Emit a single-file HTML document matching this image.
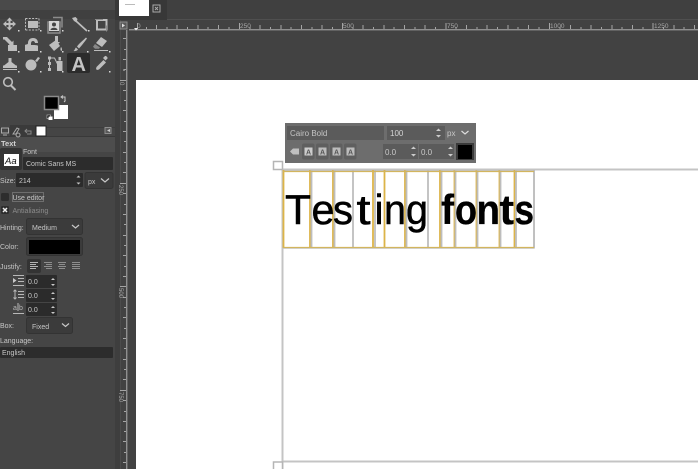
<!DOCTYPE html>
<html><head><meta charset="utf-8">
<style>
html,body{margin:0;padding:0;width:698px;height:469px;overflow:hidden;background:#434343}
svg{display:block;filter:blur(.3px)}
text{font-family:"Liberation Sans",sans-serif}
</style></head>
<body>
<svg width="698" height="469" viewBox="0 0 698 469" xmlns="http://www.w3.org/2000/svg">
<rect width="698" height="469" fill="#424242"/>
<!-- left panel -->
<rect x="0" y="0" width="115" height="469" fill="#454545"/>
<rect x="115" y="0" width="5" height="469" fill="#3e3e3e"/>
<rect x="120" y="0" width="1" height="469" fill="#4c4c4c"/>
<rect x="121" y="0" width="6" height="469" fill="#424242"/>
<circle cx="124" cy="70" r=".8" fill="#ccc"/>
<!-- top tab -->
<rect x="0" y="0" width="698" height="19" fill="#404040"/>
<rect x="0" y="0" width="115" height="10" fill="#4a4a4a"/>
<rect x="115" y="0" width="52" height="20" fill="#383838"/>
<rect x="119" y="0" width="30" height="16" fill="#fff"/>
<rect x="125" y="4" width="10" height="1" fill="#bbb"/>
<rect x="153" y="5" width="7" height="7" fill="none" stroke="#aaa"/>
<path d="M155 7l3 3m0-3l-3 3" stroke="#aaa"/>
<rect x="167" y="19" width="531" height="1" fill="#4f4f4f"/>
<!-- ruler corner -->
<rect x="120" y="22" width="7" height="7" fill="#5a5a5a" stroke="#8c8c8c"/>
<path d="M122 23.500l3 2-3 2z" fill="#ddd"/>
<!-- horizontal ruler -->
<rect x="129" y="29" width="569" height="1.400" fill="#8f8f8f"/>
<g stroke="#a5a5a5" stroke-width="1">
<path d="M137.500 23V29M146.500 27V29M156.500 25V29M167 27V29M177 25V29M187.500 27V29M198 25V29M208 27V29M218.500 25V29M229 27V29"/>
<path d="M239.500 23V29M250 27V29M260 25V29M270.500 27V29M281 25V29M291 27V29M301.500 25V29M312 27V29M322 25V29M332.500 27V29"/>
<path d="M342.500 23V29M353 27V29M363 25V29M373.500 27V29M384 25V29M394 27V29M404.500 25V29M415 27V29M425 25V29M435.500 27V29"/>
<path d="M446 23V29M456 27V29M466.500 25V29M477 27V29M487 25V29M497.500 27V29M508 25V29M518 27V29M528.500 25V29M539 27V29"/>
<path d="M549.500 23V29M560 27V29M570.500 25V29M581 27V29M591 25V29M601.500 27V29M612 25V29M622 27V29M632.500 25V29M643 27V29"/>
<path d="M653 23V29M663.500 27V29M674 25V29M684 27V29M694.500 25V29"/>
</g>
<g font-size="6.500" fill="#a8a8a8">
<text x="137" y="28">0</text>
<text x="240" y="28">250</text>
<text x="343" y="28">500</text>
<text x="447" y="28">750</text>
<text x="550" y="28">1000</text>
<text x="654" y="28">1250</text>
</g>
<path d="M134 28h4l-2 2.500z" fill="#eee"/>
<!-- vertical ruler -->
<rect x="126" y="30" width="1.400" height="439" fill="#8f8f8f"/>
<g stroke="#a5a5a5">
<path d="M123 38.500H126M124 49.500H126M123 59.500H126M124 69.500H126M120 80.500H126M123 90.500H126M124 100.500H126M123 110.500H126M124 121.500H126M123 131.500H126M124 141.500H126M123 152.500H126M124 162.500H126M123 172.500H126M120 183.500H126M123 193.500H126M124 204.500H126M123 214.500H126M124 224.500H126M123 235.500H126M124 245.500H126M123 255.500H126M124 266.500H126M123 276.500H126M120 286.500H126M123 297.500H126M124 307.500H126M123 317.500H126M124 328.500H126M123 338.500H126M124 348.500H126M123 359.500H126M124 369.500H126M123 379.500H126M120 390.500H126M123 400.500H126M124 411.500H126M123 421.500H126M124 431.500H126M123 441.500H126M124 452.500H126M123 462.500H126"/>
</g>
<g font-size="6" fill="#a8a8a8">
<text transform="translate(120,82) rotate(90)">0</text>
<text transform="translate(119,185) rotate(90)">250</text>
<text transform="translate(119,288) rotate(90)">500</text>
<text transform="translate(119,392) rotate(90)">750</text>
</g>
<!-- canvas -->
<rect x="136" y="80" width="562" height="389" fill="#fff"/>

<!-- tool icons -->
<g fill="#bdbdbd" stroke="none">
<!-- move -->
<path d="M9.500 17.500L6.500 20.800 8.500 20.800 8.500 23H6.300V21L3 24l3.300 3v-2h2.200v2.200h-2l3 3.300 3-3.300h-2V25h2.200v2l3.300-3-3.300-3v2H10.500v-2.200h2z"/>
<!-- rect select -->
<rect x="28" y="21" width="10" height="7"/>
<path d="M25.500 18.500h13.500M25.500 30h13.500M25.500 18.500V30M39 18.500V30" stroke="#bdbdbd" stroke-width="1" stroke-dasharray="2 1.300" fill="none"/>
<!-- align -->
<rect x="48" y="22" width="12" height="11" fill="none" stroke="#8c8c8c" stroke-width="1.500"/>
<path d="M53 17.500h9v10" fill="none" stroke="#8c8c8c" stroke-width="1.500"/>
<rect x="49" y="21" width="10" height="10" fill="#d5d5d5"/>
<circle cx="54" cy="24.500" r="2" fill="#444"/>
<path d="M50.500 30c0-3 7-3 7 0z" fill="#444"/>
<!-- fuzzy wand -->
<path d="M76 21l11 10" stroke="#bdbdbd" stroke-width="1.800" fill="none"/>
<path d="M72 18l3.500-1 2 2-1 3.500-2.500-1.500z"/>
<!-- crop -->
<rect x="97" y="20" width="9.500" height="9.500" fill="none" stroke="#bdbdbd" stroke-width="2"/>
<path d="M95 19.500h8M106.500 31.500v-6" stroke="#8c8c8c" fill="none"/>
<!-- transform -->
<path d="M3 37h4l5 5 1.500-1.500V46H8l1.500-1.500-5-5H3z"/>
<rect x="8" y="45" width="9" height="6"/>
<!-- heal -->
<path d="M25 51v-6c1-1 3 0 3-2 0-3 2-5 5-5 4 0 5 3 5 5h-3c0-1-1-2-2-2-2 0-2 2-2 4 3 0 7 0 7 1v5z"/>
<!-- bucket -->
<path d="M49 45l7-5 4 6-6 5z"/>
<path d="M55 36h3v6h2l-3.500 4-3.500-4h2z"/>
<path d="M61 47c1 1 1.500 3 .5 4-1 0-1.500-2-.5-4z"/>
<!-- paintbrush -->
<path d="M86 37.500l1 1c-3 4-6 8-8 10l-2-2c2-3 6-6 9-9z"/>
<path d="M76 47.500l2 2c-1 1.500-3 1.800-4.500 1.500 1.500-.8 1.500-3 2.500-3.500z"/>
<!-- eraser -->
<path d="M101 37l6 4-5 6-6-4z"/>
<path d="M95 44l5 3.500-1 1.200h-4l-2-2z" fill="#888"/>
<rect x="94" y="50" width="14" height="1" fill="#bdbdbd"/>
<!-- stamp -->
<path d="M9 58h2.500v4l4.500 3.500h1V70H3v-4.500h1L8.500 62v-4z"/>
<rect x="3" y="68" width="14" height="1" fill="#454545"/>
<!-- smudge -->
<circle cx="31" cy="65" r="5.500"/>
<path d="M35 61l3-4 2 1-3 4z"/>
<!-- path tool -->
<path d="M49.500 57v13M49.500 58h5l4 8" stroke="#bdbdbd" fill="none"/>
<rect x="48" y="56.500" width="3" height="3"/><rect x="48" y="68" width="3" height="3"/><rect x="48" y="62" width="3" height="3"/>
<rect x="57" y="61" width="5.500" height="10"/>
<rect x="58.500" y="57" width="2.500" height="3.500"/>
</g>
<!-- text tool active -->
<rect x="67" y="53" width="23" height="20" rx="2" fill="#2b2b2b"/>
<text x="71.500" y="71" font-size="20" font-weight="bold" fill="#c4c4c4">A</text>
<!-- eyedropper -->
<path d="M97 70l-1-1 .5-2 7-7 2.500 2.500-7 7z" fill="#bdbdbd"/>
<path d="M103 58l2-2c1-.5 3 1.500 2.500 2.500l-2 2z" fill="#bdbdbd"/>
<!-- magnifier -->
<circle cx="8" cy="82" r="4.300" fill="none" stroke="#bdbdbd" stroke-width="1.600"/>
<path d="M11 85.500l4.500 4.500" stroke="#bdbdbd" stroke-width="2"/>
<!-- small corner dots -->
<g fill="#d8d8d8">
<rect x="18" y="30" width="1.500" height="1.500"/><rect x="40" y="30" width="1.500" height="1.500"/><rect x="62" y="30" width="1.500" height="1.500"/><rect x="88" y="30" width="1.500" height="1.500"/>
<rect x="18" y="51" width="1.500" height="1.500"/><rect x="40" y="51" width="1.500" height="1.500"/><rect x="62" y="51" width="1.500" height="1.500"/><rect x="87" y="51" width="1.500" height="1.500"/><rect x="109" y="51" width="1.500" height="1.500"/>
<rect x="18" y="71" width="1.500" height="1.500"/><rect x="40" y="71" width="1.500" height="1.500"/><rect x="62" y="71" width="1.500" height="1.500"/><rect x="109" y="71" width="1.500" height="1.500"/>
</g>
<!-- colours -->
<rect x="54" y="105" width="14" height="14" fill="#fff"/>
<rect x="44.500" y="96.500" width="14" height="13" fill="#000" stroke="#8a8a8a" stroke-width="1.500"/>
<path d="M62 97h3v4M63 95.500l-2 1.500 2 1.500M64 102l1.500-1.500" fill="none" stroke="#c8c8c8"/>
<rect x="47" y="115" width="3.500" height="3.500" fill="#000" stroke="#bbb" stroke-width=".7"/>
<rect x="48.500" y="116.500" width="4" height="3.500" fill="#fff"/>
<!-- tabs -->
<rect x="0" y="127" width="115" height="1" fill="#3c3c3c"/>
<rect x="0" y="137" width="115" height="15" fill="#4d4d4d"/>
<rect x="0" y="136" width="115" height="1" fill="#393939"/>
<rect x="10" y="125" width="35" height="11" fill="#3a3a3a"/>
<path d="M1.500 128h7v5h-7zM3 135h4" fill="none" stroke="#aaa"/>
<path d="M13 134l4-6 2 1-3 5zM18 133a2 2 0 1 0 .1 0" fill="none" stroke="#a8a8a8"/>
<path d="M25 131h6v3h-4M27 129l-2 2 2 2" fill="none" stroke="#888"/>
<rect x="36" y="126" width="10" height="10" fill="#fff" stroke="#222"/>
<rect x="105" y="127.500" width="6" height="6" fill="#585858" stroke="#8d8d8d"/>
<path d="M110 129l-3 1.500 3 1.500z" fill="#ccc"/>
<!-- Text header -->
<text x="1" y="146" font-size="7.500" font-weight="bold" fill="#d2d2d2">Text</text>
<!-- font btn -->
<rect x="0" y="148" width="22" height="22" rx="2" fill="#333"/>
<rect x="4" y="154" width="15" height="12" fill="#fff"/>
<text x="5" y="164" font-size="9.500" font-style="italic" fill="#111">Aa</text>
<text x="23" y="154" font-size="7" fill="#c6c6c6">Font</text>
<rect x="23" y="157" width="90" height="13" rx="1" fill="#2c2c2c"/>
<text x="26" y="166" font-size="7" fill="#c8c8c8">Comic Sans MS</text>
<!-- Size -->
<text x="0" y="183" font-size="7" fill="#c6c6c6">Size:</text>
<rect x="16" y="173" width="67" height="14" rx="1" fill="#2b2b2b"/>
<text x="19" y="183" font-size="7" fill="#c8c8c8">214</text>
<path d="M76.500 177.500l2-2 2 2zM76.500 182.500l2 2 2-2z" fill="#c4c4c4"/>
<rect x="85" y="172.500" width="28" height="16" rx="2" fill="#3b3b3b" stroke="#333"/>
<text x="88" y="184" font-size="7" fill="#c6c6c6">px</text>
<path d="M101 178.500l4 3.500 4-3.500" fill="none" stroke="#c8c8c8" stroke-width="1.200"/>
<!-- Use editor -->
<rect x="1" y="193" width="8" height="8" rx="1.500" fill="#2d2d2d"/>
<rect x="12.500" y="192.500" width="31" height="9" fill="none" stroke="#6e6e6e"/>
<text x="12.500" y="200" font-size="7" fill="#c6c6c6">Use editor</text>
<!-- Antialiasing -->
<rect x="1" y="206" width="8" height="8" rx="1.500" fill="#2d2d2d"/>
<path d="M3 208l4 4m0-4l-4 4" stroke="#eee" stroke-width="1.500"/>
<text x="12.500" y="213" font-size="7" fill="#8c8c8c">Antialiasing</text>
<!-- Hinting -->
<text x="0" y="230" font-size="7" fill="#c6c6c6">Hinting:</text>
<rect x="26.500" y="218.500" width="56" height="16" rx="2" fill="#3b3b3b" stroke="#333"/>
<text x="32" y="230" font-size="7" fill="#c6c6c6">Medium</text>
<path d="M72 225l3.500 3 3.500-3" fill="none" stroke="#c8c8c8" stroke-width="1.200"/>
<!-- Color -->
<text x="0" y="249" font-size="7" fill="#c6c6c6">Color:</text>
<rect x="26.500" y="237.500" width="56" height="18" rx="2" fill="#3b3b3b" stroke="#333"/>
<rect x="29" y="240" width="51" height="14" fill="#000"/>
<!-- Justify -->
<text x="0" y="269" font-size="7" fill="#c6c6c6">Justify:</text>
<rect x="27" y="259" width="14" height="14" rx="2" fill="#333"/>
<g stroke="#b4b4b4" stroke-width="1">
<path d="M30 262.500h8M30 264.500h6M30 266.500h8M30 268.500h6"/>
<path d="M44 262.500h8M46 264.500h6M44 266.500h8M46 268.500h6" stroke="#8e8e8e"/>
<path d="M58 262.500h8M59 264.500h6M58 266.500h8M59 268.500h6" stroke="#8e8e8e"/>
<path d="M72 262.500h8M72 264.500h8M72 266.500h8M72 268.500h8" stroke="#8e8e8e"/>
</g>
<!-- spinners -->
<g>
<path d="M13 275.500h11M18 278.500h6M18 281.500h6M13 285.500h11" stroke="#b8b8b8" fill="none"/>
<path d="M13 278l3.500 2.500-3.500 2.500z" fill="#c8c8c8"/>
<rect x="26" y="275" width="31" height="13" rx="1" fill="#2b2b2b"/>
<text x="28" y="284" font-size="7" fill="#c8c8c8">0.0</text>
<path d="M51 280l2-2 2 2zM51 284l2 2 2-2z" fill="#c8c8c8"/>

<path d="M15 290v9M13.500 291.500l1.500-1.500 1.500 1.500M13.500 297.500l1.500 1.500 1.500-1.500M18 291.500h6M18 294.500h6M18 297.500h6" stroke="#b8b8b8" fill="none"/>
<rect x="26" y="289" width="31" height="13" rx="1" fill="#2b2b2b"/>
<text x="28" y="298" font-size="7" fill="#c8c8c8">0.0</text>
<path d="M51 294l2-2 2 2zM51 298l2 2 2-2z" fill="#c8c8c8"/>

<text x="13" y="310" font-size="7" fill="#b8b8b8">a</text>
<text x="19" y="310" font-size="7" fill="#b8b8b8">b</text>
<path d="M13 313.500h11M18 303v8" stroke="#b8b8b8" fill="none"/>
<rect x="26" y="303" width="31" height="13" rx="1" fill="#2b2b2b"/>
<text x="28" y="312" font-size="7" fill="#c8c8c8">0.0</text>
<path d="M51 308l2-2 2 2zM51 312l2 2 2-2z" fill="#c8c8c8"/>
</g>
<!-- Box -->
<text x="0" y="328" font-size="7" fill="#c6c6c6">Box:</text>
<rect x="26.500" y="317.500" width="46" height="16" rx="2" fill="#3b3b3b" stroke="#333"/>
<text x="32" y="329" font-size="7" fill="#c6c6c6">Fixed</text>
<path d="M62 323.500l3.500 3 3.500-3" fill="none" stroke="#c8c8c8" stroke-width="1.200"/>
<!-- Language -->
<text x="0" y="343" font-size="7" fill="#c6c6c6">Language:</text>
<rect x="0" y="347" width="113" height="11" rx="1" fill="#2c2c2c"/>
<text x="2" y="355" font-size="7" fill="#c8c8c8">English</text>

<!-- text layer frame: dashed guide -->
<path d="M282.500 170V469M282 169.500H698M282 461.500H698" stroke="#c4c4c4" stroke-width="2" fill="none"/>
<rect x="273.500" y="161.500" width="9" height="8" fill="#fff" stroke="#b5b5b5" stroke-width="1.500"/>
<rect x="273.500" y="462" width="9" height="8" fill="#fff" stroke="#b5b5b5" stroke-width="1.500"/>
<!-- glyph boxes -->
<g fill="none" stroke="#c4c4c4" stroke-width="1.500">
<rect x="283" y="170.500" width="251" height="77.500"/>
</g>
<g stroke-width="1.800">
<path d="M283.500 170V248M310 170V248M333 170V248M373 170V248M384.500 170V248M405 170V248M440 170V248M454.500 170V248M476.500 170V248M499.500 170V248M514.500 170V248" stroke="#dcb448"/>
<path d="M311.500 170V248M334.500 170V248M353 170V248M375 170V248M406.500 170V248M428 170V248M441.500 170V248M455.500 170V248M477.500 170V248M500.500 170V248M516 170V248M534 170V248" stroke="#bdbdbd"/>
</g>
<g stroke="#d2b55e" stroke-width="1.200" fill="none">
<path d="M283 171.500H534M283 247.500H534"/>
</g>
<!-- on canvas text -->
<g font-size="42" fill="#000" stroke="#000" stroke-width=".5">
<text x="285" y="224" textLength="26" lengthAdjust="spacingAndGlyphs">T</text>
<text x="311.500" y="224" textLength="23" lengthAdjust="spacingAndGlyphs">e</text>
<text x="333" y="224" textLength="20" lengthAdjust="spacingAndGlyphs">s</text>
<text x="356.500" y="224" textLength="14" lengthAdjust="spacingAndGlyphs">t</text>
<text x="374.500" y="224" textLength="9" lengthAdjust="spacingAndGlyphs">i</text>
<text x="384" y="224" textLength="22" lengthAdjust="spacingAndGlyphs">n</text>
<text x="406" y="224" textLength="22" lengthAdjust="spacingAndGlyphs">g</text>
<g font-weight="bold" stroke-width=".3">
<text x="441" y="224" textLength="13" lengthAdjust="spacingAndGlyphs">f</text>
<text x="455" y="224" textLength="22" lengthAdjust="spacingAndGlyphs">o</text>
<text x="476.500" y="224" textLength="23.500" lengthAdjust="spacingAndGlyphs">n</text>
<text x="499.500" y="224" textLength="14.500" lengthAdjust="spacingAndGlyphs">t</text>
<text x="514.500" y="224" textLength="19.500" lengthAdjust="spacingAndGlyphs">s</text>
</g>
</g>
<!-- on-canvas toolbar -->
<rect x="285" y="123" width="191" height="40" fill="#6d6d6d"/>
<rect x="287" y="126" width="97" height="14" fill="#5b5b5b"/>
<text x="290" y="136" font-size="8" fill="#c4c4c4">Cairo Bold</text>
<rect x="387" y="126" width="58" height="14" fill="#5b5b5b"/>
<text x="390" y="136" font-size="8" fill="#d4d4d4">100</text>
<path d="M436 131l2.500-2.500 2.500 2.500zM436 135l2.500 2.500 2.500-2.500z" fill="#ccc"/>
<text x="447" y="136" font-size="8" fill="#c8c8c8">px</text>
<path d="M461.500 131l3.500 3 3.500-3" fill="none" stroke="#ddd" stroke-width="1.200"/>
<path d="M290 151.500l3-3h6v6h-6z" fill="#c0c0c0"/>
<g>
<rect x="302" y="143.500" width="12.500" height="16" rx="2" fill="#5f5f5f"/>
<rect x="316" y="143.500" width="12.500" height="16" rx="2" fill="#5f5f5f"/>
<rect x="330" y="143.500" width="12.500" height="16" rx="2" fill="#5f5f5f"/>
<rect x="344" y="143.500" width="12.500" height="16" rx="2" fill="#5f5f5f"/>
<rect x="304.500" y="147.500" width="8" height="8" fill="#ccc"/>
<rect x="318.500" y="147.500" width="8" height="8" fill="#bcbcbc"/>
<rect x="332.500" y="147.500" width="8" height="8" fill="#bcbcbc"/>
<rect x="346.500" y="147.500" width="8" height="8" fill="#bcbcbc"/>
<g font-size="7" font-weight="bold" fill="#555">
<text x="306" y="154.500">A</text><text x="320" y="154.500">A</text><text x="334" y="154.500">A</text><text x="348" y="154.500">A</text>
</g>
</g>
<rect x="383" y="144" width="35" height="15" fill="#5b5b5b"/>
<text x="385" y="155" font-size="8" fill="#c8c8c8">0.0</text>
<path d="M411 149l2.500-2.500 2.500 2.500zM411 154l2.500 2.500 2.500-2.500z" fill="#ccc"/>
<rect x="419" y="144" width="35" height="15" fill="#5b5b5b"/>
<text x="421" y="155" font-size="8" fill="#c8c8c8">0.0</text>
<path d="M448 149l2.500-2.500 2.500 2.500zM448 154l2.500 2.500 2.500-2.500z" fill="#ccc"/>
<rect x="456" y="143" width="18" height="17" fill="#3a3a3a"/>
<rect x="458" y="145" width="14" height="14" fill="#000"/>
</svg>
</body></html>
